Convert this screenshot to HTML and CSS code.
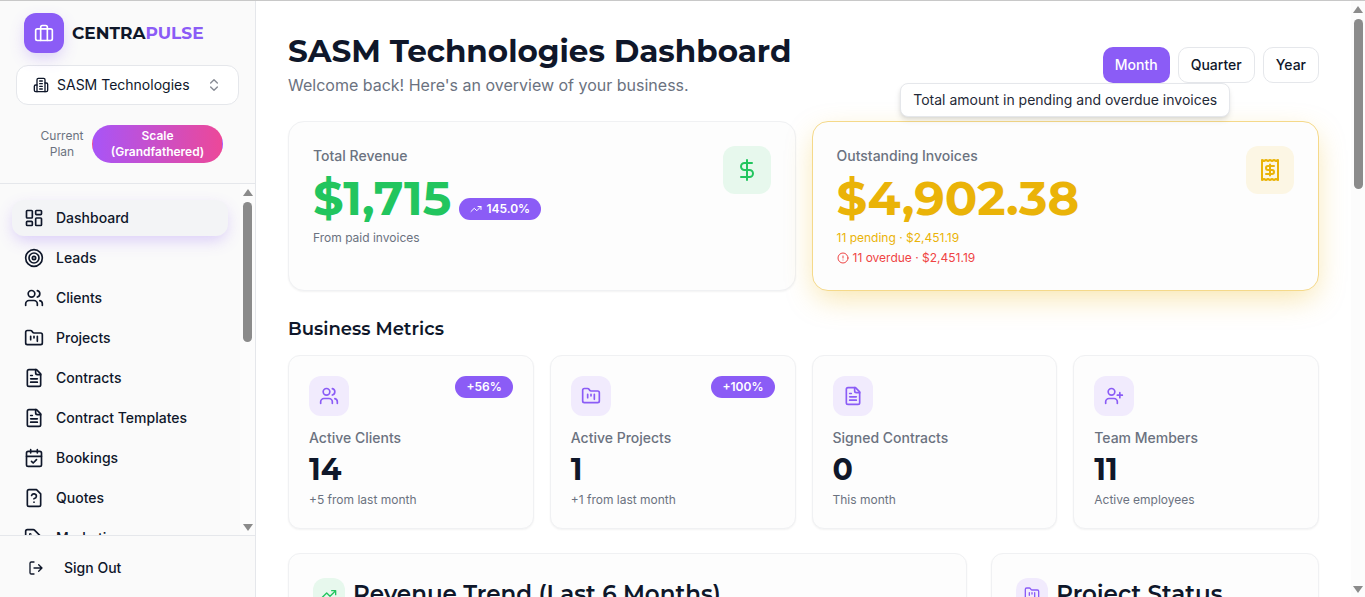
FILE: index.html
```html
<!DOCTYPE html>
<html lang="en">
<head>
<meta charset="utf-8">
<meta name="viewport" content="width=device-width, initial-scale=1">
<title>SASM Technologies Dashboard</title>
<link rel="stylesheet" href="styles.css">
</head>
<body>
<svg class="sprite" aria-hidden="true">
  <symbol id="i-briefcase" viewBox="0 0 24 24"><rect x="2" y="7" width="20" height="14" rx="2"/><path d="M16 21V5a2 2 0 0 0-2-2h-4a2 2 0 0 0-2 2v16"/></symbol>
  <symbol id="i-building" viewBox="0 0 24 24"><path d="M6 22V4a2 2 0 0 1 2-2h8a2 2 0 0 1 2 2v18Z"/><path d="M6 12H4a2 2 0 0 0-2 2v6a2 2 0 0 0 2 2h2M18 9h2a2 2 0 0 1 2 2v9a2 2 0 0 1-2 2h-2M10 6h4M10 10h4M10 14h4M10 18h4"/></symbol>
  <symbol id="i-updown" viewBox="0 0 24 24"><path d="m7 15 5 5 5-5M7 9l5-5 5 5"/></symbol>
  <symbol id="i-dashboard" viewBox="0 0 24 24"><rect x="3" y="3" width="7" height="9" rx="1"/><rect x="14" y="3" width="7" height="5" rx="1"/><rect x="14" y="12" width="7" height="9" rx="1"/><rect x="3" y="16" width="7" height="5" rx="1"/></symbol>
  <symbol id="i-target" viewBox="0 0 24 24"><circle cx="12" cy="12" r="10"/><circle cx="12" cy="12" r="6"/><circle cx="12" cy="12" r="2"/></symbol>
  <symbol id="i-users" viewBox="0 0 24 24"><path d="M16 21v-2a4 4 0 0 0-4-4H6a4 4 0 0 0-4 4v2"/><circle cx="9" cy="7" r="4"/><path d="M22 21v-2a4 4 0 0 0-3-3.87M16 3.13a4 4 0 0 1 0 7.75"/></symbol>
  <symbol id="i-kanban" viewBox="0 0 24 24"><path d="M4 20h16a2 2 0 0 0 2-2V8a2 2 0 0 0-2-2h-7.93a2 2 0 0 1-1.66-.9l-.82-1.2A2 2 0 0 0 7.93 3H4a2 2 0 0 0-2 2v13c0 1.1.9 2 2 2ZM8 10v4M12 10v2M16 10v6"/></symbol>
  <symbol id="i-file" viewBox="0 0 24 24"><path d="M15 2H6a2 2 0 0 0-2 2v16a2 2 0 0 0 2 2h12a2 2 0 0 0 2-2V7Z"/><path d="M14 2v4a2 2 0 0 0 2 2h4M10 9H8M16 13H8M16 17H8"/></symbol>
  <symbol id="i-calendar" viewBox="0 0 24 24"><path d="M8 2v4M16 2v4M3 10h18M9 16l2 2 4-4"/><rect x="3" y="4" width="18" height="18" rx="2"/></symbol>
  <symbol id="i-question" viewBox="0 0 24 24"><path d="M12 17h.01M15 2H6a2 2 0 0 0-2 2v16a2 2 0 0 0 2 2h12a2 2 0 0 0 2-2V7ZM9.1 9a3 3 0 0 1 5.82 1c0 2-3 3-3 3"/></symbol>
  <symbol id="i-tag" viewBox="0 0 24 24"><path d="M12.59 2.59A2 2 0 0 0 11.17 2H4a2 2 0 0 0-2 2v7.17a2 2 0 0 0 .59 1.42l8.7 8.7a2.43 2.43 0 0 0 3.42 0l6.58-6.58a2.43 2.43 0 0 0 0-3.42Z"/><circle cx="7.5" cy="7.5" r=".5"/></symbol>
  <symbol id="i-logout" viewBox="0 0 24 24"><path d="M9 21H5a2 2 0 0 1-2-2V5a2 2 0 0 1 2-2h4M16 17l5-5-5-5M21 12H9"/></symbol>
  <symbol id="i-dollar" viewBox="0 0 24 24"><path d="M12 2v20M17 5H9.5a3.5 3.5 0 0 0 0 7h5a3.5 3.5 0 0 1 0 7H6"/></symbol>
  <symbol id="i-receipt" viewBox="0 0 24 24"><path d="M4 2v20l2-1 2 1 2-1 2 1 2-1 2 1 2-1 2 1V2l-2 1-2-1-2 1-2-1-2 1-2-1-2 1Z"/><path d="M16 8h-6a2 2 0 1 0 0 4h4a2 2 0 1 1 0 4H8M12 17.5v-11"/></symbol>
  <symbol id="i-trend" viewBox="0 0 24 24"><path d="m22 7-8.5 8.5-5-5L2 17M16 7h6v6"/></symbol>
  <symbol id="i-alert" viewBox="0 0 24 24"><circle cx="12" cy="12" r="10"/><path d="M12 8v4M12 16h.01"/></symbol>
  <symbol id="i-userplus" viewBox="0 0 24 24"><path d="M16 21v-2a4 4 0 0 0-4-4H6a4 4 0 0 0-4 4v2"/><circle cx="9" cy="7" r="4"/><path d="M19 8v6M22 11h-6"/></symbol>
</svg>

<div class="app">
  <aside class="sidebar">
    <div class="sidebar-top">
      <a class="brand" href="#">
        <span class="brand-mark"><svg class="icon"><use href="#i-briefcase"/></svg></span>
        <span class="brand-name">CENTRA<span class="brand-accent">PULSE</span></span>
      </a>
      <button class="org" type="button">
        <svg class="icon icon-sm"><use href="#i-building"/></svg>
        <span class="org-name">SASM Technologies</span>
        <svg class="icon icon-sm org-arrows"><use href="#i-updown"/></svg>
      </button>
      <div class="plan">
        <span class="plan-label">Current Plan</span>
        <span class="plan-badge">Scale (Grandfathered)</span>
      </div>
    </div>
    <div class="nav-area">
      <nav class="nav">
        <a class="nav-link active" href="#" aria-current="page"><svg class="icon"><use href="#i-dashboard"/></svg>Dashboard</a>
        <a class="nav-link" href="#"><svg class="icon"><use href="#i-target"/></svg>Leads</a>
        <a class="nav-link" href="#"><svg class="icon"><use href="#i-users"/></svg>Clients</a>
        <a class="nav-link" href="#"><svg class="icon"><use href="#i-kanban"/></svg>Projects</a>
        <a class="nav-link" href="#"><svg class="icon"><use href="#i-file"/></svg>Contracts</a>
        <a class="nav-link" href="#"><svg class="icon"><use href="#i-file"/></svg>Contract Templates</a>
        <a class="nav-link" href="#"><svg class="icon"><use href="#i-calendar"/></svg>Bookings</a>
        <a class="nav-link" href="#"><svg class="icon"><use href="#i-question"/></svg>Quotes</a>
        <a class="nav-link" href="#"><svg class="icon"><use href="#i-tag"/></svg>Marketing</a>
      </nav>
      <div class="scrollbar" aria-hidden="true"><span class="arrow up"></span><span class="thumb thumb-nav"></span><span class="arrow down"></span></div>
    </div>
    <div class="sidebar-foot">
      <button class="signout" type="button"><svg class="icon icon-sm"><use href="#i-logout"/></svg>Sign Out</button>
    </div>
  </aside>

  <main class="main">
    <header class="page-head">
      <div>
        <h1 class="title">SASM Technologies Dashboard</h1>
        <p class="subtitle">Welcome back! Here's an overview of your business.</p>
      </div>
      <div class="periods">
        <button class="period selected" type="button">Month</button>
        <button class="period" type="button">Quarter</button>
        <button class="period" type="button">Year</button>
      </div>
    </header>

    <section class="grid two">
      <article class="card card-lg">
        <div>
          <p class="label">Total Revenue</p>
          <div class="big-row"><p class="big green">$1,715</p><span class="badge"><svg class="icon icon-xs"><use href="#i-trend"/></svg>145.0%</span></div>
          <p class="note">From paid invoices</p>
        </div>
        <span class="tile tile-lg tile-green"><svg class="icon icon-lg"><use href="#i-dollar"/></svg></span>
      </article>
      <article class="card card-lg warn">
        <div>
          <p class="label">Outstanding Invoices</p>
          <div class="big-row"><p class="big amber">$4,902.38</p></div>
          <p class="note amber">11 pending · $2,451.19</p>
          <p class="note overdue"><svg class="icon icon-xs"><use href="#i-alert"/></svg>11 overdue · $2,451.19</p>
        </div>
        <span class="tile tile-lg tile-amber"><svg class="icon icon-lg"><use href="#i-receipt"/></svg></span>
        <div class="tooltip" role="tooltip">Total amount in pending and overdue invoices</div>
      </article>
    </section>

    <section>
      <h2 class="section-title">Business Metrics</h2>
      <div class="grid four">
        <article class="card metric">
          <div class="metric-top"><span class="tile"><svg class="icon"><use href="#i-users"/></svg></span><span class="badge">+56%</span></div>
          <p class="label">Active Clients</p><p class="value">14</p><p class="note">+5 from last month</p>
        </article>
        <article class="card metric">
          <div class="metric-top"><span class="tile"><svg class="icon"><use href="#i-kanban"/></svg></span><span class="badge">+100%</span></div>
          <p class="label">Active Projects</p><p class="value">1</p><p class="note">+1 from last month</p>
        </article>
        <article class="card metric">
          <div class="metric-top"><span class="tile"><svg class="icon"><use href="#i-file"/></svg></span></div>
          <p class="label">Signed Contracts</p><p class="value">0</p><p class="note">This month</p>
        </article>
        <article class="card metric">
          <div class="metric-top"><span class="tile"><svg class="icon"><use href="#i-userplus"/></svg></span></div>
          <p class="label">Team Members</p><p class="value">11</p><p class="note">Active employees</p>
        </article>
      </div>
    </section>

    <section class="grid three">
      <article class="card panel wide">
        <span class="tile tile-sm tile-green"><svg class="icon icon-sm"><use href="#i-trend"/></svg></span>
        <h3 class="panel-title">Revenue Trend (Last 6 Months)</h3>
      </article>
      <article class="card panel">
        <span class="tile tile-sm"><svg class="icon icon-sm"><use href="#i-kanban"/></svg></span>
        <h3 class="panel-title">Project Status</h3>
      </article>
    </section>
  </main>
  <div class="scrollbar page-scroll" aria-hidden="true"><span class="arrow up"></span><span class="thumb thumb-page"></span><span class="arrow down"></span></div>
</div>
</body>
</html>
```

FILE: styles.css
```css
:root {
  --ink: #0f172a;
  --muted: #6b7280;
  --violet: #8b5cf6;
  --green: #22c55e;
  --amber: #eab308;
  --line: #e5e7eb;
  --display: Montserrat, Inter, sans-serif;
}
* { box-sizing: border-box; }
body {
  margin: 0;
  font-family: Inter, sans-serif;
  font-size: 14px;
  line-height: 20px;
  color: var(--ink);
  background: #fff;
}
h1, h2, h3, p { margin: 0; }
button { font: inherit; color: inherit; cursor: pointer; }
a { color: inherit; text-decoration: none; }
.sprite { display: none; }

.icon {
  width: 20px;
  height: 20px;
  flex: none;
  fill: none;
  stroke: currentColor;
  stroke-width: 2;
  stroke-linecap: round;
  stroke-linejoin: round;
}
.icon-xs { width: 12px; height: 12px; }
.icon-sm { width: 16px; height: 16px; }
.icon-lg { width: 24px; height: 24px; }

.app {
  display: flex;
  height: 100vh;
  overflow: hidden;
  border-top: 1px solid #c8c8c8;
}

/* Sidebar */
.sidebar {
  display: flex;
  flex-direction: column;
  flex: none;
  width: 256px;
  background: #fafafa;
  border-right: 1px solid var(--line);
}
.sidebar-top {
  padding: 12px 16px 20px;
  border-bottom: 1px solid var(--line);
}
.brand {
  display: flex;
  align-items: center;
  gap: 8px;
  padding-left: 8px;
}
.brand-mark {
  display: grid;
  place-items: center;
  width: 40px;
  height: 40px;
  border-radius: 12px;
  color: #fff;
  background: var(--violet);
  box-shadow: 0 6px 16px -2px rgba(139, 92, 246, .3);
}
.brand-name {
  font-family: var(--display);
  font-size: 17px;
  font-weight: 700;
}
.brand-accent { color: var(--violet); }
.org {
  display: flex;
  align-items: center;
  gap: 8px;
  width: 100%;
  height: 40px;
  margin: 12px 0 20px;
  padding: 0 16px;
  text-align: left;
  background: #fff;
  border: 1px solid var(--line);
  border-radius: 12px;
}
.org-name { flex: 1; }
.org-arrows { opacity: .5; }
.plan {
  display: flex;
  align-items: center;
  justify-content: space-between;
  padding: 0 16px 0 24px;
  gap: 8px;
  font-size: 12px;
  line-height: 16px;
  text-align: center;
}
.plan-label { color: var(--muted); }
.plan-badge {
  flex: none;
  width: 131px;
  padding: 2px 10px;
  color: #fff;
  font-weight: 600;
  background: linear-gradient(to right, #a855f7, #ec4899);
  border: 1px solid transparent;
  border-radius: 20px;
}
.nav-area {
  display: flex;
  flex: 1;
  min-height: 0;
  overflow: hidden;
}
.nav {
  display: flex;
  flex: 1;
  flex-direction: column;
  gap: 4px;
  padding: 16px 12px;
}
.nav-link {
  display: flex;
  flex: none;
  align-items: center;
  gap: 12px;
  height: 36px;
  padding: 0 12px;
  font-weight: 500;
  border-radius: 12px;
}
.nav-link.active {
  background: #f3f4f6;
  box-shadow: 0 6px 16px -2px rgba(139, 92, 246, .3);
}
.sidebar-foot {
  padding: 12px 12px 9px;
  border-top: 1px solid var(--line);
}
.signout {
  display: flex;
  align-items: center;
  gap: 20px;
  width: 100%;
  height: 40px;
  padding: 0 16px;
  font-weight: 500;
  background: none;
  border: 0;
}

/* Scroll tracks */
.scrollbar {
  display: flex;
  flex: none;
  flex-direction: column;
  align-items: center;
  width: 15px;
  padding: 5px 0 4px;
  background: #fcfcfc;
}
.page-scroll { width: 14px; }
.arrow {
  border: 5px solid transparent;
  border-top-width: 0;
  border-bottom: 7px solid #8b8b8b;
}
.arrow.down {
  margin-top: auto;
  border-top: 7px solid #8b8b8b;
  border-bottom-width: 0;
}
.thumb {
  width: 9px;
  margin-top: 6px;
  background: #8b8b8b;
  border-radius: 5px;
}
.thumb-nav { height: 41%; }
.thumb-page { height: 29%; }

/* Main column */
.main {
  display: flex;
  flex: 1;
  flex-direction: column;
  gap: 24px;
  min-width: 0;
  padding: 32px;
  overflow: hidden;
}
.page-head {
  display: flex;
  align-items: center;
  justify-content: space-between;
}
.title {
  margin-bottom: 4px;
  font-family: var(--display);
  font-size: 31px;
  line-height: 36px;
  font-weight: 700;
}
.subtitle { font-size: 16px; line-height: 24px; color: var(--muted); }
.periods { display: flex; gap: 8px; }
.period {
  height: 36px;
  padding: 0 12px;
  font-weight: 500;
  background: #fff;
  border: 1px solid var(--line);
  border-radius: 10px;
}
.period.selected {
  color: #fff;
  background: var(--violet);
  border-width: 0;
}
.grid { display: grid; gap: 16px; }
.two { grid-template-columns: 1fr 1fr; }
.four { grid-template-columns: repeat(4, 1fr); }
.three { grid-template-columns: repeat(3, 1fr); gap: 24px; }
.wide { grid-column: span 2; }

.card {
  background: #fdfdfd;
  border: 1px solid #f0f1f3;
  border-radius: 12px;
  box-shadow: 0 1px 2px rgba(0, 0, 0, .05);
}
.card-lg {
  position: relative;
  display: flex;
  justify-content: space-between;
  align-items: flex-start;
  padding: 24px;
  border-radius: 16px;
}
.warn {
  border-color: #f5d98a;
  box-shadow: 0 10px 30px -4px rgba(234, 179, 8, .35);
}
.label { font-weight: 500; color: var(--muted); }
.big-row { display: flex; align-items: baseline; gap: 8px; margin: 8px 0; }
.big {
  font-family: var(--display);
  font-size: 48px;
  line-height: 48px;
  font-weight: 700;
}
.green { color: var(--green); }
.note { font-size: 12px; line-height: 16px; color: var(--muted); }
.amber { color: var(--amber); }
.overdue {
  display: flex;
  align-items: center;
  gap: 4px;
  margin-top: 4px;
  color: #ef4444;
}
.badge {
  display: inline-flex;
  align-items: center;
  gap: 4px;
  padding: 3px 11px;
  font-size: 12px;
  line-height: 16px;
  font-weight: 600;
  color: #fff;
  background: var(--violet);
  border-radius: 11px;
}
.tile {
  display: grid;
  flex: none;
  place-items: center;
  width: 40px;
  height: 40px;
  color: var(--violet);
  background: #f1ebfd;
  border-radius: 12px;
}
.tile-lg { width: 48px; height: 48px; }
.tile-sm { width: 32px; height: 32px; }
.tile-green { color: var(--green); background: #e7f8ed; }
.tile-amber { color: var(--amber); background: #fcf6e4; }
.tooltip {
  position: absolute;
  left: 50%;
  bottom: calc(100% + 5px);
  transform: translateX(-50%);
  padding: 6px 12px;
  white-space: nowrap;
  color: #1f2937;
  background: #fff;
  border: 1px solid var(--line);
  border-radius: 8px;
  box-shadow: 0 4px 6px -1px rgba(0, 0, 0, .1), 0 2px 4px -2px rgba(0, 0, 0, .1);
}
.section-title {
  margin-bottom: 12px;
  font-family: var(--display);
  font-size: 18px;
  line-height: 28px;
  font-weight: 600;
}
.metric { padding: 20px; }
.metric-top {
  display: flex;
  align-items: flex-start;
  justify-content: space-between;
  margin-bottom: 12px;
}
.value {
  margin: 4px 0;
  font-family: var(--display);
  font-size: 30px;
  line-height: 36px;
  font-weight: 700;
}
.panel {
  display: flex;
  align-items: flex-start;
  gap: 8px;
  min-height: 320px;
  padding: 24px;
}
.panel-title {
  font-family: var(--display);
  font-size: 23px;
  line-height: 32px;
  font-weight: 600;
}
```
